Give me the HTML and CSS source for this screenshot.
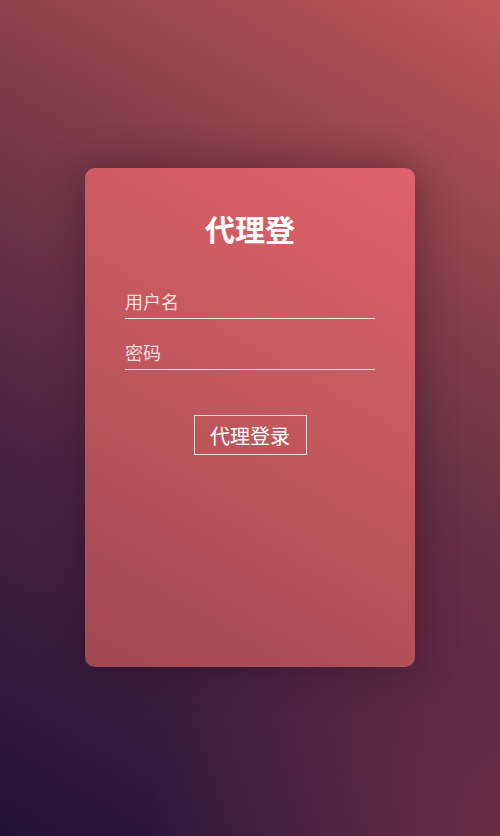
FILE: index.html
```html
<!DOCTYPE html>
<html lang="zh">
<head>
<meta charset="utf-8">
<title>代理登</title>
<link rel="stylesheet" href="styles.css">
</head>
<body>
<div class="page">
  <div class="card">
    <h1 class="title">代理登</h1>
    <form class="form">
      <input class="field" type="text" placeholder="用户名">
      <input class="field" type="password" placeholder="密码">
      <div class="actions">
        <button class="btn" type="button">代理登录</button>
      </div>
    </form>
  </div>
</div>
</body>
</html>
```
FILE: styles.css
```css
html, body {
  margin: 0;
  padding: 0;
  height: 100%;
}
body {
  font-family: "Noto Sans CJK SC", "Liberation Sans", sans-serif;
  background:
    radial-gradient(ellipse 70% 45% at 100% 100%, rgba(120, 50, 70, 0.75) 0%, rgba(120, 50, 70, 0) 100%),
    linear-gradient(30deg, #22123a 0%, #4a2240 35%, #7a3a48 65%, #c25757 100%);
  min-height: 836px;
}
.page {
  display: flex;
  justify-content: center;
  padding-top: 168px;
}
.card {
  width: 330px;
  height: 499px;
  box-sizing: border-box;
  border-radius: 10px;
  background: linear-gradient(30deg, #a04852 0%, #c0575d 50%, #e0626a 100%);
  box-shadow: 0 0 40px rgba(40, 10, 30, 0.45);
  padding: 37px 40px 0;
}
.title {
  margin: 0;
  text-align: center;
  color: #fff;
  font-size: 30px;
  font-weight: bold;
  line-height: 46px;
}
.form {
  display: flex;
  flex-direction: column;
  margin-top: 36px;
}
.field {
  display: block;
  width: 250px;
  box-sizing: border-box;
  background: transparent;
  border: none;
  border-bottom: 1px solid #f4e4e4;
  color: #fff;
  font-family: "Noto Sans CJK SC", "Liberation Sans", sans-serif;
  font-size: 18px;
  padding: 0 0 4px;
  height: 32px;
  line-height: 27px;
  outline: none;
  margin-bottom: 19px;
}
.field::placeholder {
  color: #f8dede;
}
.actions {
  display: flex;
  justify-content: center;
  margin-top: 26px;
}
.btn {
  width: 113px;
  height: 40px;
  background: transparent;
  border: 1px solid #f0d8d8;
  color: #fff;
  font-family: "Noto Sans CJK SC", "Liberation Sans", sans-serif;
  font-size: 20px;
  padding: 0;
  cursor: pointer;
}
```
